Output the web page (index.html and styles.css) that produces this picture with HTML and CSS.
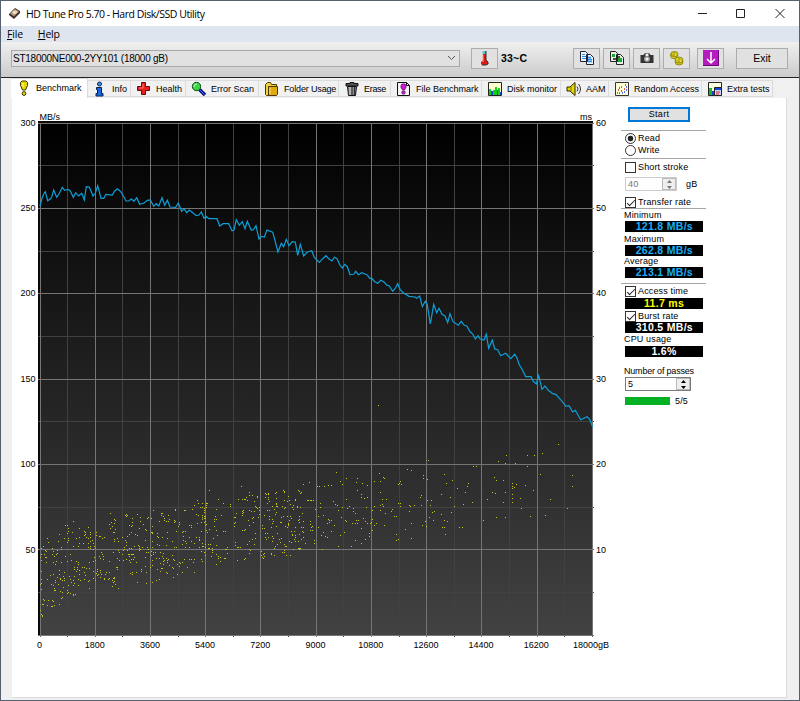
FILE: index.html
```html
<!DOCTYPE html>
<html lang="en">
<head>
<meta charset="UTF-8">
<meta name="viewport" content="width=device-width, initial-scale=1.0">
<title>HD Tune Pro 5.70 - Hard Disk/SSD Utility</title>
<link rel="stylesheet" href="styles.css">
</head>
<body>
<div class="window">
    <!-- Title bar -->
    <div class="titlebar">
        <svg class="app-icon" width="13" height="13" viewBox="0 0 13 13"><path d="M1 7L7 1l5 3v2l-6 6-5-4z" fill="#3a2d25"/><path d="M2 6.600L7 2l4 2.300L6 9.500z" fill="#b9987c"/><ellipse cx="6.800" cy="5.300" rx="2.300" ry="1.800" fill="#f2dcc4"/></svg>
        <span class="title">HD Tune Pro 5.70 - Hard Disk/SSD Utility</span>
        <svg class="controls" width="88" height="12" viewBox="0 0 88 12" fill="none" stroke="#222"><path d="M1 5.500h9M39.500 1.500h8v8h-8zM78.500 1l9 9M87.500 1l-9 9"/></svg>
    </div>
    <div class="menubar"><span><u>F</u>ile</span><span><u>H</u>elp</span></div>

    <!-- Toolbar -->
    <div class="toolbar">
        <div class="combo"><span>ST18000NE000-2YY101 (18000 gB)</span>
            <svg width="9" height="6" viewBox="0 0 9 6" fill="none" stroke="#555"><path d="M1 1l3.500 3.500L8 1"/></svg></div>
        <div class="btn thermo"><svg width="16" height="16" viewBox="0 0 16 16"><path d="M6 1h3v9l2 2v2l-2 1H5l-1-1v-2l2-2z" fill="#e01818"/><path d="M5.500 1h3v3h-3z" fill="#55c8d0"/><path d="M9 1v9l2 2v2l-2 1H5" fill="none" stroke="#333"/><path d="M6 5v7" stroke="#ff9a8a"/></svg></div>
        <span class="temp">33~C</span>
        <div class="btn copy1"><svg width="16" height="16" viewBox="0 0 16 16"><path d="M1.500 1.500h5l2 2v8h-7zM7.500 4.500h4l3 3v7h-7z" fill="#eef5ff" stroke="#223"/><path d="M3 4.500h3M3 6.500h4M3 8.500h4" stroke="#2b8be8"/><path d="M9 7.500h3M9 9.500h4M9 11.500h4" stroke="#2b8be8" stroke-width="1.300"/></svg></div>
        <div class="btn copy2"><svg width="16" height="16" viewBox="0 0 16 16"><path d="M1.500 1.500h5l2 2v8h-7zM7.500 4.500h4l3 3v7h-7z" fill="#e8efe8" stroke="#222"/><path d="M3 4h3v3H3zM9 8h4v4H9z" fill="#18a838"/><path d="M4 8h3v2H4zM9 6h2v2H9z" fill="#5a4a38"/></svg></div>
        <div class="btn camera"><svg width="16" height="16" viewBox="0 0 16 16"><path d="M1.500 5h3L6 3h4l1.500 2h3v8h-13z" fill="#333"/><path d="M6.500 3.500h3V6h-3z" fill="#eee"/><circle cx="8" cy="9" r="3" fill="#999"/><circle cx="8" cy="9" r="1.500" fill="#f4f4f4"/></svg></div>
        <div class="btn coins"><svg width="16" height="16" viewBox="0 0 16 16" stroke="#756d00" stroke-width=".7" fill="#d6ca16"><ellipse cx="5" cy="5.500" rx="3.600" ry="3.200"/><ellipse cx="5.500" cy="4" rx="3.600" ry="2.500"/><ellipse cx="10" cy="12" rx="4" ry="3"/><ellipse cx="10" cy="10" rx="4" ry="3"/><path d="M4 3l3 3M8 8l4 4" stroke="#f7f08a" stroke-width="1"/><path d="M5 2v4M10 8v4"/></svg></div>
        <div class="btn down"><svg width="16" height="16" viewBox="0 0 16 16"><path d="M0 0h16v16H0z" fill="#b51cc0"/><path d="M0 15.500h15.500V0" fill="none" stroke="#6d0c78"/><path d="M8 2v11M4 9l4 4 4-4" fill="none" stroke="#fff" stroke-width="1.500"/></svg></div>
        <div class="btn exit">Exit</div>
    </div>

    <!-- Tabs -->
    <div class="tabs">
        <div class="tab active"><svg width="16" height="16" viewBox="0 0 16 16"><path d="M6 1h4l1.500 1.500v3L9.500 10h-3l-2-4.500v-3z" fill="#e8d800" stroke="#3c3800"/><circle cx="8" cy="13.500" r="1.900" fill="#e8d800" stroke="#3c3800"/><path d="M7 3v4" stroke="#fff99a"/></svg><span>Benchmark</span></div>
        <div class="tab info"><svg width="16" height="16" viewBox="0 0 16 16"><circle cx="6.500" cy="3" r="2" fill="#3b95f5" stroke="#06204a"/><path d="M3.500 6.500h5v6h1.500v2.500h-7v-2.500h1.500v-4H3.500z" fill="#1668e0" stroke="#06204a"/></svg><span>Info</span></div>
        <div class="tab health"><svg width="16" height="16" viewBox="0 0 16 16"><path d="M5.500 1.500h4v4h4v4h-4v4h-4v-4h-4v-4h4z" fill="#e82020" stroke="#551010"/><path d="M7 3v4H3" fill="none" stroke="#ff7777"/></svg><span>Health</span></div>
        <div class="tab errors"><svg width="16" height="16" viewBox="0 0 16 16"><path d="M8.500 8.500l5.500 5.500" stroke="#101080" stroke-width="3.500"/><path d="M9 9l4.500 4.500" stroke="#3078ff"/><circle cx="5.500" cy="5.500" r="4.200" fill="#35d640" stroke="#145018"/><path d="M3 6q0-3 3-3" fill="none" stroke="#c4ffc4"/></svg><span>Error Scan</span></div>
        <div class="tab folder"><svg width="16" height="16" viewBox="0 0 16 16"><path d="M1.500 3.500l2-2h3l1 2h5v10l-1 1h-9l-1-1z" fill="#f0d040" stroke="#4a3900"/><path d="M4.500 5.500h9v8l-1 1h-8z" fill="#dfa910" stroke="#4a3900"/><path d="M6 7v6" stroke="#ffe46a"/></svg><span>Folder Usage</span></div>
        <div class="tab erase"><svg width="16" height="16" viewBox="0 0 16 16"><path d="M2 2.500h4v-1h4v1h4V5H2z" fill="#555" stroke="#111"/><path d="M3.500 5.500h9l-1 9h-7z" fill="#888" stroke="#111"/><path d="M6 6v8" stroke="#ddd"/><path d="M8 6v8M10.500 6v8" stroke="#333"/></svg><span>Erase</span></div>
        <div class="tab file"><svg width="16" height="16" viewBox="0 0 16 16"><path d="M1.500 1.500h9l3 3v10h-12z" fill="#f4f4f4" stroke="#111"/><path d="M10.500 1.500v3h3" fill="none" stroke="#111"/><path d="M6 3h3l1 1.500v2L8.500 9h-2L5 6.500v-2z" fill="#d018d8" stroke="#560560" stroke-width=".7"/><circle cx="7.500" cy="11.500" r="1.700" fill="#d018d8" stroke="#560560" stroke-width=".7"/></svg><span>File Benchmark</span></div>
        <div class="tab disk"><svg width="16" height="16" viewBox="0 0 16 16"><path d="M1.500 1.500h13v13h-13z" fill="#ffffd0" stroke="#222"/><path d="M2 8h2v6H2zM6 9h2v5H6zM8 6h2v8H8zM11 7h2v7h-2z" fill="#11cf1b"/><path d="M4 10h2v4H4zM10 9h1v5h-1zM13 11h1v3h-1z" fill="#1747dc"/></svg><span>Disk monitor</span></div>
        <div class="tab aam"><svg width="16" height="16" viewBox="0 0 16 16"><path d="M1 6h3l5-4.500v13L4 10H1z" fill="#e8d800" stroke="#2c2900"/><path d="M5 6v4" stroke="#7d7500"/><path d="M11 5.500q2 2.500 0 5M12.500 3q4 5 0 10" fill="none" stroke="#333"/></svg><span>AAM</span></div>
        <div class="tab random"><svg width="16" height="16" viewBox="0 0 16 16"><path d="M1.500 1.500h13v13h-13z" fill="#ffffd8" stroke="#333"/><path d="M3 12h1M4 9h1M7 10h1M7 6h1M10 8h1M11 4h1" stroke="#e02020" stroke-width="1.500"/><path d="M5 12h1M8 12h1M10 11h1M12 9h1M12 6h1M5 7h1" stroke="#2440ee" stroke-width="1.500"/></svg><span>Random Access</span></div>
        <div class="tab extra"><svg width="16" height="16" viewBox="0 0 16 16"><path d="M1.500 1.500h13v13h-13z" fill="#ffffe0" stroke="#222"/><path d="M2 7h3v7H2z" fill="#18b828"/><path d="M5 10h2v4H5z" fill="#1740dc"/><path d="M7.500 6.500h7v8h-7z" fill="#c8d6ff" stroke="#222"/><path d="M8 7h6v2H8z" fill="#1740dc"/><path d="M9 11h4M9 13h3" stroke="#e02020"/></svg><span>Extra tests</span></div>
    </div>

    <div class="page">
        <svg class="chart" id="chart" width="603" height="555" viewBox="12 98 603 555">
            <defs>
                <linearGradient id="plot-bg" x1="0" y1="0" x2="0" y2="1">
                    <stop offset="0" stop-color="#000"/>
                    <stop offset="1" stop-color="#424242"/>
                </linearGradient>
            </defs>
            <rect x="38" y="121" width="555" height="515" fill="#0a0a0a"/>
            <rect x="40" y="123" width="553" height="512" fill="url(#plot-bg)"/>
            <g id="grid"></g>
            <g id="dots"></g>
            <polyline id="rate" fill="none" stroke="#0d9fd8" stroke-width="1.200"/>
            <g id="labels" class="axis"></g>
        </svg>

        <!-- Results panel -->
        <div class="side">
            <div class="start">Start</div>
            <div class="group modes">
                <div class="row"><i class="radio on"></i>Read</div>
                <div class="row"><i class="radio"></i>Write</div>
            </div>
            <div class="group stroke">
                <div class="row"><i class="check"></i>Short stroke</div>
                <div class="row size"><div class="spin disabled"><span>40</span><b><svg width="7" height="11" viewBox="0 0 7 11"><path d="M1 4l2.500-3L6 4zM1 7l2.500 3L6 7z"/></svg></b></div><span class="unit">gB</span></div>
                <div class="row transfer"><i class="check on"></i>Transfer rate</div>
            </div>
            <div class="group rates">
                <div class="name">Minimum</div><div class="value">121.8 MB/s</div>
                <div class="name">Maximum</div><div class="value">262.8 MB/s</div>
                <div class="name avg">Average</div><div class="value">213.1 MB/s</div>
            </div>
            <div class="group access">
                <div class="row"><i class="check on"></i>Access time</div>
                <div class="value ms">11.7 ms</div>
                <div class="row burst"><i class="check on"></i>Burst rate</div>
                <div class="value white">310.5 MB/s</div>
                <div class="name">CPU usage</div>
                <div class="value white cpu">1.6%</div>
            </div>
            <div class="passes">
                <div class="name">Number of passes</div>
                <div class="spin"><span>5</span><b><svg width="7" height="11" viewBox="0 0 7 11"><path d="M1 4l2.500-3L6 4zM1 7l2.500 3L6 7z"/></svg></b></div>
                <div class="progress"><i></i><span>5/5</span></div>
            </div>
        </div>
    </div>
</div>
<script src="chart.js"></script>
</body>
</html>
```
FILE: styles.css
```css
* {
    box-sizing: border-box;
}

body {
    margin: 0;
    font-family: "Liberation Sans", Arial, sans-serif;
    font-size: 9px;
    color: #000;
}

.window {
    width: 800px;
    height: 701px;
    background: #f0f0f0;
    border: 1px solid #566170;
    overflow: hidden;
}

svg {
    display: block;
    flex: none;
}

/* title and menu */
.titlebar {
    height: 25px;
    background: #fff;
    display: flex;
    align-items: center;
    padding: 0 14px 0 7px;
    font: 10.5px "Open Sans", sans-serif;
}

.title {
    margin-left: 5px;
    letter-spacing: -0.45px;
}

.controls {
    margin-left: auto;
}

.menubar {
    height: 16px;
    background: #dfe5ee;
    display: flex;
    gap: 15px;
    padding-left: 6px;
    font: 10.5px/16px "Open Sans", sans-serif;
    letter-spacing: -0.2px;
}

/* toolbar */
.toolbar {
    height: 36px;
    background: linear-gradient(#f0f0f0, #cbcbcb);
    border-bottom: 1px solid #222;
    display: flex;
    align-items: center;
    padding: 0 11px 3px 10px;
}

.combo {
    width: 449px;
    height: 17px;
    background: #e1e1e1;
    border: 1px solid #a9a9a9;
    display: flex;
    align-items: center;
    justify-content: space-between;
    padding: 0 3px 0 1px;
    font-size: 10px;
    letter-spacing: -0.25px;
}

.btn {
    width: 27px;
    height: 21px;
    background: #e1e1e1;
    border: 1px solid #adadad;
    display: flex;
    align-items: center;
    justify-content: center;
    flex: none;
}

.thermo {
    margin-left: 11px;
}

.temp {
    width: 75px;
    padding-left: 3px;
    font-size: 10.5px;
    font-weight: bold;
    letter-spacing: 0.2px;
}

.copy2,
.camera,
.coins {
    margin-left: 3px;
}

.down {
    margin-left: 7px;
}

.exit {
    width: 52px;
    margin-left: auto;
    font-size: 10.5px;
}

/* tabs */
.tabs {
    height: 20px;
    display: flex;
    align-items: flex-end;
    padding: 0 0 1px 10px;
}

.tab {
    height: 17px;
    display: flex;
    align-items: center;
    background: #f1f1f1;
    border: 1px solid #dcdcdc;
    border-width: 1px 1px 1px 0;
    padding-left: 5px;
    white-space: nowrap;
}

.tab span {
    margin-left: 4px;
}

.tab.active {
    width: 77px;
    height: 20px;
    background: #fff;
    margin-bottom: -1px;
    border-bottom: 0;
    padding-left: 5px;
    padding-bottom: 2px;
}

.info { width: 43px; }
.info span { margin-left: 3px; }
.health { width: 55px; }
.errors { width: 73px; }
.folder { width: 80px; letter-spacing: -0.15px; }
.erase { width: 52px; letter-spacing: -0.3px; }
.file { width: 91px; }
.disk { width: 79px; }
.aam { width: 48px; }
.random { width: 93px; }
.extra { width: 71px; }

.page {
    width: 775px;
    height: 600px;
    margin-left: 11px;
    background: #fff;
    border-right: 1px solid #dcdcdc;
    border-bottom: 1px solid #dcdcdc;
    display: flex;
}

.axis {
    font-size: 9px;
}

/* right hand panel */
.side {
    width: 85px;
    margin-left: 6px;
    padding-top: 9px;
    letter-spacing: 0.15px;
}

.start {
    width: 62px;
    height: 15px;
    margin: 0 0 8px 7px;
    border: 2px solid #0078d7;
    background: #e1e1e1;
    line-height: 10px;
    text-align: center;
    letter-spacing: 0.3px;
}

.group {
    border-top: 1px solid #a6a6a6;
    padding-left: 4px;
}

.modes {
    height: 28px;
    padding-top: 1px;
}

.row {
    height: 12px;
    display: flex;
    align-items: center;
    white-space: nowrap;
}

.radio,
.check {
    width: 11px;
    height: 11px;
    border: 1px solid #333;
    background: #fff;
    margin-right: 2px;
    flex: none;
}

.radio {
    border-radius: 50%;
}

.radio.on {
    background: radial-gradient(circle, #222 0 2.5px, #fff 3.2px);
}

.check.on::before {
    content: "";
    display: block;
    width: 7px;
    height: 3px;
    margin: 2px 0 0 1px;
    border: solid #222;
    border-width: 0 0 1px 1px;
    transform: rotate(-45deg);
}

.stroke {
    height: 50px;
    padding-top: 2px;
}

.size {
    height: 14px;
    margin: 4px 0;
}

.spin {
    width: 66px;
    height: 14px;
    border: 1px solid #7a7a7a;
    display: flex;
    justify-content: space-between;
    line-height: 12px;
    padding-left: 2px;
}

.spin b {
    width: 14px;
    background: #eee;
    border: 1px solid #bbb;
    display: flex;
    align-items: center;
    justify-content: center;
}

.spin.disabled {
    width: 52px;
    color: #777;
    border-color: #ccc;
}

.spin.disabled path {
    fill: #777;
}

.unit {
    margin-left: 9px;
}

.transfer {
    margin-top: 5px;
}

.name {
    height: 12px;
    line-height: 12px;
    margin-left: -1px;
    white-space: nowrap;
}

.value {
    width: 78px;
    height: 11px;
    background: #000;
    color: #18aef5;
    font-size: 10.5px;
    font-weight: bold;
    line-height: 11px;
    letter-spacing: 0.3px;
    text-align: right;
    padding-right: 10px;
    margin-bottom: 1px;
}

.value.ms {
    color: #ff0;
    text-align: center;
    padding: 0;
    margin-top: 1px;
}

.value.white {
    color: #fff;
}

.value.cpu {
    text-align: center;
    padding: 0;
}

.rates {
    height: 75px;
}

.avg {
    height: 10px;
    line-height: 9px;
}

.access {
    height: 82px;
    padding-top: 1px;
}

.access .name {
    line-height: 11px;
}

.passes {
    padding-left: 4px;
}

.passes .name {
    letter-spacing: -0.2px;
}

.progress {
    display: flex;
    align-items: center;
    margin-top: 5px;
}

.progress i {
    width: 45px;
    height: 8px;
    background: #06b025;
    margin-right: 5px;
}
```
FILE: chart.js
```js
const NS = 'http://www.w3.org/2000/svg';

function add(parent, tag, attrs, text) {
    const el = document.createElementNS(NS, tag);
    for (const key in attrs) el.setAttribute(key, attrs[key]);
    if (text !== undefined) el.textContent = text;
    document.getElementById(parent).appendChild(el);
}

// Grid lines, every second one is major
function gridLine(x, y, w, h, major) {
    add('grid', 'rect', { x, y, width: w, height: h, fill: major ? '#757575' : '#414141' });
}
for (const major of [false, true]) {
    for (let i = 0; i <= 20; i++) {
        if ((i % 2 === 0) === major) gridLine(Math.floor(40 + i * 27.62), 123, 1, 514, major);
    }
    for (let i = 0; i <= 12; i++) {
        if ((i % 2 === 0) === major) gridLine(38, Math.floor(123 + i * 42.67), 556, 1, major);
    }
}

// Axis labels
for (let i = 0; i < 6; i++) {
    const y = Math.floor(126 + i * 85.4);
    add('labels', 'text', { x: 35.5, y, 'text-anchor': 'end' }, 300 - i * 50);
    add('labels', 'text', { x: 596, y }, 60 - i * 10);
}
for (let i = 0; i <= 10; i++) {
    add('labels', 'text', { x: i === 10 ? 591 : 39.5 + i * 55.2, y: 648, 'text-anchor': 'middle' }, i === 10 ? '18000gB' : i * 1800);
}
add('labels', 'text', { x: 39.5, y: 120 }, 'MB/s');
add('labels', 'text', { x: 580, y: 120 }, 'ms');

// Transfer rate, stored in thirds of a pixel from (30,110)
const rate = [
    30,288,36,265,42,250,46,245,53,272,61,267,65,261,71,240,80,262,87,252,97,232,104,241,114,238,121,243,130,262,137,248,146,258,155,250,163,270,169,230,178,231,189,258,196,250,203,227,213,265,221,265,228,253,247,255,254,243,262,236,270,243,277,252,288,273,296,273,304,267,312,274,320,263,329,283,342,279,352,271,361,270,371,289,379,281,386,288,396,263,404,286,412,271,420,291,437,292,445,279,455,304,462,296,470,308,478,300,489,309,499,317,507,315,514,306,522,325,528,319,537,326,561,326,569,348,579,341,596,341,606,362,612,360,619,329,628,346,637,335,645,356,652,334,664,361,670,359,678,347,687,387,694,379,703,381,711,360,728,367,735,392,744,426,754,400,761,410,769,388,777,407,787,395,796,396,803,436,811,403,821,438,831,427,845,422,853,442,
    868,457,878,446,888,437,896,446,906,453,913,442,921,446,930,466,937,474,944,463,952,470,960,494,971,493,977,484,985,494,995,488,1012,495,1019,505,1026,505,1034,515,1043,520,1052,511,1062,516,1070,525,1078,528,1088,544,1095,536,1103,521,1110,538,1120,548,1137,559,1155,561,1160,565,1169,558,1177,590,1186,574,1192,584,1201,642,1211,583,1220,608,1227,595,1236,613,1245,618,1253,638,1260,611,1269,635,1285,646,1294,634,1302,645,1311,649,1319,664,1328,672,1336,687,1344,677,1350,686,1362,690,1369,673,1376,715,1387,690,1394,717,1403,719,1412,737,1427,730,1442,746,1454,733,1461,744,1468,764,1479,783,1487,800,1503,800,1510,814,1519,822,1526,797,1536,838,1545,828,1555,841,1568,851,1577,853,1594,871,1608,889,1617,887,1628,906,1636,901,1652,929,1671,920,1679,928,1688,951
];
const points = [];
for (let i = 0; i < rate.length; i += 2) {
    points.push((30 + rate[i] / 3).toFixed(1) + ',' + (110 + rate[i + 1] / 3).toFixed(1));
}
document.getElementById('rate').setAttribute('points', points.join(' '));

// Access times, in thirds of a pixel from the given corner
function plot(left, top, seeks) {
    for (let i = 0; i < seeks.length; i += 2) {
        add('dots', 'rect', {
            x: Math.round(left + seeks[i] / 3 - 0.5),
            y: Math.round(top + seeks[i + 1] / 3 - 0.5),
            width: 1, height: 1, fill: '#c8c70c'
        });
    }
}

plot(38, 500, [
    217,40,106,65,82,75,88,77,90,86,90,93,102,96,87,100,65,103,78,114,91,114,91,121,89,126,115,114,125,113,123,84,138,95,143,98,143,103,152,81,156,96,158,103,139,106,144,112,152,114,158,113,175,97,176,106,184,109,187,110,199,111,194,114,27,115,32,126,60,125,15,139,10,144,44,145,69,143,71,149,58,151,105,139,121,139,125,130,137,129,150,129,165,129,163,120,156,124,158,138,152,143,158,146,168,140,173,145,166,149,
    22,152,25,153,46,155,57,160,55,163,43,164,19,164,11,163,8,171,10,180,21,173,25,173,24,187,48,169,54,183,46,188,81,168,97,164,100,181,89,183,71,187,53,193,115,183,122,187,122,193,108,203,109,207,117,202,119,207,114,215,124,212,132,202,139,203,146,205,154,204,154,188,166,184,171,181,168,172,183,170,189,158,192,164,196,170,196,179,188,176,213,185,227,158,238,175,243,182,255,181,
    11,213,65,210,47,223,38,225,63,222,78,216,59,231,66,234,77,230,80,235,80,241,66,239,74,240,29,238,53,240,41,254,11,237,11,249,6,254,9,267,45,256,52,248,50,266,60,252,48,271,53,271,75,263,68,273,90,257,92,256,98,237,94,228,108,229,105,240,101,246,110,251,125,222,121,237,140,218,141,227,138,237,126,242,121,256,105,256,87,272,90,276,74,278,72,291,88,281,96,280,105,284,107,286,113,282,154,266,
    153,240,152,245,166,213,166,236,171,242,178,214,175,220,180,222,178,226,178,207,187,210,188,217,191,222,187,232,202,222,206,218,213,218,200,236,200,239,212,238,215,235,222,240,227,234,230,236,230,244,227,246,232,253,222,258,240,264,229,232,239,201,239,208,234,202,
    17,297,20,300,30,300,44,302,47,303,70,295,14,314,17,313,27,317,42,318,50,317,65,312,39,320,7,332,11,343,12,346,12,349,
    214,72,229,57,232,62,228,69,219,66,222,79,218,86,231,88,230,96,227,98,238,115,228,117,228,124,264,42,262,46,269,45,266,49,268,46,298,44,283,55,306,53,307,64,329,54,331,53,283,67,282,76,275,77,279,79,317,74,321,88,324,92,305,86,279,97,275,103,269,109,292,104,299,105,254,111,262,120,266,128,240,125,323,121,
    265,136,258,141,258,147,273,145,281,146,290,138,300,137,305,138,303,145,306,149,314,142,329,143,331,148,240,151,243,157,253,163,267,150,256,152,270,162,275,162,284,163,281,163,286,164,273,170,289,171,285,177,280,177,304,151,324,157,331,158,323,172,266,177,275,182,276,187,
    294,188,323,199,310,209,310,215,294,216,324,217,283,217,283,224,276,219,297,246,326,250,
    345,30,370,40,373,41,369,46,375,50,378,55,391,46,394,58,379,62,384,63,392,64,363,63,339,55,342,79,341,96,344,96,344,100,358,101,360,111,358,110,389,98,374,112,389,114,404,124,343,124,365,137,358,133,343,141,384,135,341,153,347,158,353,157,341,165,346,162,354,175,364,176,342,180,368,157,374,169,377,161,377,174,379,182,386,174,388,180,402,167,392,178,405,177,375,184,388,187,376,193,366,189,344,195,338,201,403,202,406,206,393,196,358,208,371,206,372,206,367,214,386,217,389,220,405,233,365,238,354,241,343,246
]);

plot(174, 476, [
    107,43,70,74,72,81,86,82,96,81,101,82,60,88,80,95,85,94,96,87,91,97,92,103,90,103,91,109,54,101,32,102,35,102,5,99,5,104,96,94,132,71,147,81,169,85,169,91,128,99,143,119,124,122,121,130,127,131,122,135,121,150,68,114,72,118,86,119,84,124,90,121,94,121,91,126,95,128,86,131,95,135,90,138,71,142,83,139,97,144,94,147,
    0,132,4,136,2,139,16,140,15,144,45,148,53,149,52,154,12,152,6,165,35,166,28,165,26,170,81,165,96,164,105,160,101,170,128,163,147,165,153,166,130,178,118,187,45,184,29,182,66,183,75,185,76,190,77,193,27,193,33,196,37,201,26,204,52,197,61,201,85,201,85,210,95,206,103,206,110,205,126,209,114,216,
    2,214,6,214,34,213,45,214,75,214,87,212,93,214,103,217,106,217,114,222,160,214,157,221,154,219,81,227,90,228,94,238,115,229,127,236,113,241,132,240,138,244,134,248,153,247,152,246,160,233,138,255,126,265,86,255,83,251,60,251,31,250,46,249,53,249,2,254,15,260,19,261,24,260,11,264,15,271,41,275,58,259,10,295,26,288,61,290,
    203,31,226,48,227,57,236,59,251,61,249,65,218,65,220,72,214,70,206,69,212,71,193,69,241,77,243,90,248,95,251,97,257,95,257,102,209,104,204,106,205,111,208,108,226,104,232,107,241,107,187,112,206,117,185,124,181,125,183,139,182,143,181,150,223,134,235,126,239,125,253,124,237,138,227,149,257,116,204,163,210,163,213,161,243,172,243,186,234,190,227,197,220,204,242,205,
    183,200,185,207,189,213,193,213,198,213,230,222,226,220,226,233,215,246,211,249,190,254,
    274,52,277,55,284,55,275,65,282,53,284,65,282,70,286,77,281,82,306,49,305,53,327,43,330,45,330,48,308,66,331,72,345,73,340,77,374,43,375,45,381,50,380,52,389,25,406,20,343,60,365,69,363,73,280,104,286,104,272,118,295,90,306,83,307,86,306,92,311,90,301,99,306,108,306,110,286,121,285,129,295,131,299,136,294,141,303,115,326,91,333,95,330,97,329,121,323,125,322,138,320,138,350,84,357,88,355,94,359,100,369,92,370,95,378,94,401,73,404,74,408,73,412,73,417,74,385,111,376,120,377,129,372,133,375,139,388,135,
    340,122,348,121,352,127,346,134,342,142,343,144,342,149,341,153,333,150,352,165,354,175,355,178,361,165,365,154,382,154,389,155,388,168,385,166,365,178,364,184,361,190,375,176,364,196,352,198,347,195,388,185,381,189,372,197,393,203,409,137,410,146,414,151,411,155,410,162,414,162,264,148,264,157,270,157,292,155,308,150,
    274,173,280,171,274,183,284,183,276,190,294,182,298,188,295,195,311,173,317,189,323,186,319,198,311,205,304,210,332,206,336,211,333,211,302,217,330,224,330,230,325,229,292,231,292,235,301,238,270,231,263,226,262,238,268,236,271,242,265,243,267,247,337,237,348,237,358,220,374,216,376,216,379,217,376,220
]);

plot(310, 390, [
    204,45,356,212,80,247,110,265,142,265,90,273,138,276,158,281,98,283,22,289,29,288,42,289,56,286,65,286,173,286,194,273,208,250,211,273,219,263,223,265,293,238,303,240,340,256,341,265,351,268,270,275,268,280,274,282,265,283,402,253,428,271,410,281,442,294,475,281,473,289,467,307,394,314,422,322,
    142,301,153,313,153,323,163,325,171,321,211,307,217,327,229,327,335,317,331,322,32,340,31,351,16,358,71,334,77,343,82,347,97,352,110,329,118,349,113,354,84,362,169,351,193,349,212,345,218,342,220,348,186,360,211,360,247,358,244,364,227,370,265,340,270,340,271,349,298,346,302,349,313,345,298,364,334,347,353,331,364,331,360,347,432,349,460,344,488,338,
    25,378,39,375,95,382,137,371,129,356,130,363,254,379,260,378,373,363,368,366,393,373,424,367,357,382,369,390,345,393,349,408,337,405,303,400,287,418,305,446,260,433,265,449,260,452,222,405,199,401,193,406,188,421,183,397,186,388,180,400,173,401,165,393,160,385,145,391,139,390,137,401,142,401,127,400,155,415,178,431,179,440,165,447,155,461,135,451,123,469,107,392,109,395,103,428,92,436,85,469,72,406,64,391,58,392,59,398,54,388,53,399,24,411,39,427,34,436,46,439,51,441,65,424,36,477,13,450,14,459,404,391,411,395,396,411,402,411,407,433,447,411,456,413,
    489,230,498,228,564,215,585,220,590,197,617,220,653,195,674,195,697,190,745,164,651,230,691,253,788,256,788,289,554,263,559,271,580,271,608,279,620,283,608,290,613,292,606,296,646,286,671,301,547,307,557,309,587,307,607,314,606,324,631,324,532,327,579,338,606,337,635,355,720,327,772,355,521,391,559,382,585,382,661,380,706,376
]);
```
